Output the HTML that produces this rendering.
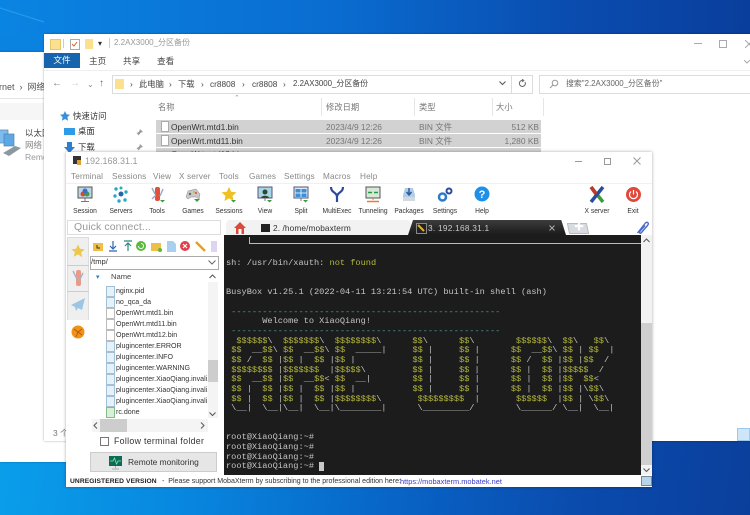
<!DOCTYPE html>
<html><head><meta charset="utf-8"><style>
html,body{margin:0;padding:0}
body{width:750px;height:515px;overflow:hidden;position:relative;background:#0a6fd2;font-family:"Liberation Sans","Noto Sans CJK SC",sans-serif}
#r{position:absolute;left:0;top:0;width:750px;height:515px;overflow:hidden;filter:blur(.35px);background:linear-gradient(98deg,#0aa6ee 0%,#0888e0 30%,#0866c8 55%,#0a4aac 80%,#0b3f9c 100%)}
#r div,#r svg{position:absolute}
.t{white-space:nowrap;line-height:12px}
.m{top:171px;font-size:8.2px;color:#888;letter-spacing:.15px}
.l{width:40px;text-align:center;top:205px;font-size:7.6px;color:#333;transform:scaleX(.88)}
.f{left:116px;font-size:7.7px;color:#333;transform:scaleX(.92);transform-origin:0 0}
.i{left:106px;width:7px;height:9px;background:#e6f2fb;border:.5px solid #a4c0d4}
.w{left:106px;width:7px;height:9px;background:#fff;border:.5px solid #bbb}
pre{position:absolute;margin:0;font-family:"Liberation Mono",monospace;font-size:8.65px;line-height:9.67px;color:#c4c4c4;white-space:pre}
pre b{font-weight:normal;color:#b4b83c}
</style></head><body><div id="r">
<!-- wallpaper -->
<div style="left:0;top:0;width:750px;height:34px;background:linear-gradient(90deg,#0a84e2 0%,#0a6cd0 45%,#0a4db0 75%,#0a3e9c 100%)"></div>
<div style="left:0;top:34px;width:44px;height:18px;background:#0a82e0"></div>
<svg style="left:0;top:0" width="120" height="52"><path d="M0 8L44 22" stroke="#3aa6f0" stroke-width="1.200" opacity=".6"/></svg>

<!-- back window -->
<div style="left:0;top:52px;width:70px;height:410px;background:#fff;box-shadow:0 0 2px rgba(0,0,0,.3)"></div>
<div class="t" style="left:-1px;top:81px;font-size:9px;color:#555">rnet &nbsp;› &nbsp;网络</div>
<div style="left:0;top:98px;width:44px;height:1px;background:#e4e4e4"></div>
<div style="left:0;top:103px;width:44px;height:17px;background:#f6f6f6"></div>
<svg style="left:0;top:128px" width="22" height="30" viewBox="0 0 22 30"><rect x="-4" y="2" width="12" height="13" fill="#7cbcee" stroke="#5a80a8" stroke-width=".7"/><rect x="4" y="6" width="10" height="12" fill="#5aa8e6" stroke="#5a80a8" stroke-width=".7"/><path d="M3 25l12-7 6 2-12 8z" fill="#8a98a2"/></svg>
<div class="t" style="left:25px;top:127px;font-size:8.5px;color:#444">以太网</div>
<div class="t" style="left:25px;top:139px;font-size:8.5px;color:#888">网络</div>
<div class="t" style="left:25px;top:151px;font-size:8.5px;color:#999">Remo</div>

<!-- explorer -->
<div style="left:44px;top:34px;width:706px;height:407px;background:#fff;box-shadow:0 0 2px rgba(0,0,0,.35)"></div>
<div style="left:50px;top:39px;width:9px;height:9px;background:#fbe08f;border:.5px solid #e5c76a"></div>
<div style="left:63px;top:39px;width:1px;height:9px;background:#ccc"></div>
<div style="left:70px;top:39px;width:8px;height:9px;background:#fff;border:1px solid #aaa"></div>
<svg style="left:71px;top:41px" width="7" height="6" viewBox="0 0 7 6"><path d="M1 3l2 2 3-4" fill="none" stroke="#d9602c" stroke-width="1"/></svg>
<div style="left:85px;top:39px;width:8px;height:10px;background:#fbe08f"></div>
<div class="t" style="left:98px;top:38px;font-size:8px;color:#333">▾</div>
<div style="left:109px;top:38px;width:1px;height:10px;background:#ccc"></div>
<div class="t" style="left:114px;top:37px;font-size:8px;color:#999">2.2AX3000_分区备份</div>
<div style="left:694px;top:43px;width:8px;height:1px;background:#aaa"></div>
<div style="left:719px;top:40px;width:6px;height:6px;border:1px solid #aaa"></div>
<svg style="left:745px;top:40px" width="5" height="8"><path d="M0 0l8 8M8 0l-8 8" stroke="#aaa" fill="none"/></svg>
<div class="t" style="left:44px;top:53px;width:36px;height:15px;background:#1663ae;color:#fff;font-size:8.6px;line-height:15px;text-align:center">文件</div>
<div class="t" style="left:89px;top:55px;font-size:8.6px;color:#444">主页</div>
<div class="t" style="left:123px;top:55px;font-size:8.6px;color:#444">共享</div>
<div class="t" style="left:157px;top:55px;font-size:8.6px;color:#444">查看</div>
<svg style="left:744px;top:60px" width="6" height="4"><path d="M0 0l3 3 3-3" fill="none" stroke="#aaa"/></svg>
<div style="left:44px;top:70px;width:706px;height:1px;background:#eee"></div>
<div class="t" style="left:52px;top:78px;font-size:10px;color:#777">←</div>
<div class="t" style="left:70px;top:78px;font-size:10px;color:#ccc">→</div>
<div class="t" style="left:87px;top:79px;font-size:8px;color:#888">⌄</div>
<div class="t" style="left:99px;top:78px;font-size:10px;color:#666">↑</div>
<div style="left:112px;top:75px;width:419px;height:17px;border:1px solid #dcdcdc"></div>
<div style="left:511px;top:75px;width:1px;height:18px;background:#dcdcdc"></div>
<div style="left:115px;top:79px;width:9px;height:10px;background:#fbe08f"></div>
<div class="t" style="left:130px;top:78px;font-size:8.3px;color:#444">›</div>
<div class="t" style="left:139px;top:78px;font-size:8.3px;color:#444">此电脑</div>
<div class="t" style="left:169px;top:78px;font-size:8.3px;color:#444">›</div>
<div class="t" style="left:178px;top:78px;font-size:8.3px;color:#444">下载</div>
<div class="t" style="left:201px;top:78px;font-size:8.3px;color:#444">›</div>
<div class="t" style="left:210px;top:78px;font-size:8.3px;color:#444">cr8808</div>
<div class="t" style="left:242px;top:78px;font-size:8.3px;color:#444">›</div>
<div class="t" style="left:252px;top:78px;font-size:8.3px;color:#444">cr8808</div>
<div class="t" style="left:283px;top:78px;font-size:8.3px;color:#444">›</div>
<div class="t" style="left:293px;top:78px;font-size:7.9px;color:#444">2.2AX3000_分区备份</div>
<svg style="left:499px;top:81px" width="7" height="5"><path d="M.5 .5l3 3 3-3" fill="none" stroke="#555"/></svg>
<svg style="left:518px;top:79px" width="9" height="10" viewBox="0 0 9 10"><path d="M7 3a3 3 0 1 1-2-1.500" fill="none" stroke="#666"/><path d="M4 0l2 1.500-2 1.500" fill="none" stroke="#666" stroke-width=".8"/></svg>
<div style="left:539px;top:75px;width:211px;height:17px;border:1px solid #dcdcdc;border-right:0"></div>
<svg style="left:549px;top:79px" width="10" height="10"><circle cx="6" cy="4" r="2.800" fill="none" stroke="#999"/><path d="M4 6L1 9" stroke="#999"/></svg>
<div class="t" style="left:566px;top:78px;font-size:7.9px;color:#666">搜索"2.2AX3000_分区备份"</div>
<div class="t" style="left:158px;top:101px;font-size:8.3px;color:#777">名称</div>
<div class="t" style="left:326px;top:101px;font-size:8.3px;color:#777">修改日期</div>
<div class="t" style="left:419px;top:101px;font-size:8.3px;color:#777">类型</div>
<div class="t" style="left:496px;top:101px;font-size:8.3px;color:#777">大小</div>
<div style="left:321px;top:98px;width:1px;height:18px;background:#e6e6e6"></div>
<div style="left:414px;top:98px;width:1px;height:18px;background:#e6e6e6"></div>
<div style="left:492px;top:98px;width:1px;height:18px;background:#e6e6e6"></div>
<div style="left:543px;top:98px;width:1px;height:18px;background:#e6e6e6"></div>
<div class="t" style="left:234px;top:93px;font-size:7px;color:#999">⌃</div>
<div style="left:156px;top:120px;width:385px;height:13px;background:#d2d2d2"></div>
<div style="left:156px;top:134px;width:385px;height:13px;background:#d2d2d2"></div>
<div style="left:156px;top:148px;width:385px;height:6px;background:#d2d2d2"></div>
<div style="left:161px;top:121px;width:6px;height:9px;background:#fff;border:.5px solid #aaa"></div>
<div style="left:161px;top:135px;width:6px;height:9px;background:#fff;border:.5px solid #aaa"></div>
<div class="t" style="left:171px;top:121px;font-size:8.4px;color:#333">OpenWrt.mtd1.bin</div>
<div class="t" style="left:171px;top:135px;font-size:8.4px;color:#333">OpenWrt.mtd11.bin</div>
<div class="t" style="left:171px;top:148px;font-size:8.4px;color:#555">OpenWrt.mtd12.bin</div>
<div class="t" style="left:326px;top:121px;font-size:8.4px;color:#777">2023/4/9 12:26</div>
<div class="t" style="left:326px;top:135px;font-size:8.4px;color:#777">2023/4/9 12:26</div>
<div class="t" style="left:419px;top:121px;font-size:8.4px;color:#777">BIN 文件</div>
<div class="t" style="left:419px;top:135px;font-size:8.4px;color:#777">BIN 文件</div>
<div class="t" style="left:490px;width:49px;text-align:right;top:121px;font-size:8.4px;color:#777">512 KB</div>
<div class="t" style="left:490px;width:49px;text-align:right;top:135px;font-size:8.4px;color:#777">1,280 KB</div>
<svg style="left:60px;top:111px" width="10" height="10"><path d="M5 0l1.500 3.300 3.500.4-2.600 2.400.7 3.600L5 8 1.900 9.700l.7-3.600L0 3.700l3.500-.4z" fill="#3a8fdc"/></svg>
<div class="t" style="left:73px;top:110px;font-size:8.4px;color:#333">快速访问</div>
<div style="left:64px;top:128px;width:11px;height:7px;background:#2e9be6"></div>
<div class="t" style="left:78px;top:125px;font-size:8.4px;color:#333">桌面</div>
<svg style="left:64px;top:142px" width="11" height="11"><path d="M3 0h5v5h3L5.500 11 0 5h3z" fill="#2c7fd0"/></svg>
<div class="t" style="left:78px;top:141px;font-size:8.4px;color:#333">下载</div>
<svg style="left:136px;top:129px" width="7" height="7"><path d="M4 0l3 3-2 .5-1.500 1.500L3 6.500 .5 4 2 3.500 3.500 2z" fill="#999"/></svg>
<svg style="left:136px;top:144px" width="7" height="7"><path d="M4 0l3 3-2 .5-1.500 1.500L3 6.500 .5 4 2 3.500 3.500 2z" fill="#999"/></svg>
<div class="t" style="left:53px;top:427px;font-size:8.4px;color:#777">3 个</div>
<div style="left:737px;top:428px;width:13px;height:13px;background:#cfe6f8;border:1px solid #9cc8ec;box-sizing:border-box"></div>

<!-- moba -->
<div style="left:66px;top:152px;width:586px;height:335px;background:#fff;box-shadow:0 0 3px rgba(0,0,0,.35)"></div>
<div style="left:73px;top:156px;width:8px;height:8px;background:#333"></div>
<div style="left:77px;top:160px;width:4px;height:5px;background:#d9a032"></div>
<div class="t" style="left:85px;top:155px;font-size:9px;color:#999">192.168.31.1</div>
<div style="left:575px;top:161px;width:7px;height:1px;background:#999"></div>
<div style="left:604px;top:158px;width:5px;height:5px;border:1px solid #999"></div>
<svg style="left:633px;top:157px" width="8" height="8"><path d="M.5 .5l7 7M7.500 .5l-7 7" stroke="#999" fill="none"/></svg>
<div class="t m" style="left:71px">Terminal</div>
<div class="t m" style="left:112px">Sessions</div>
<div class="t m" style="left:153px">View</div>
<div class="t m" style="left:179px">X server</div>
<div class="t m" style="left:219px">Tools</div>
<div class="t m" style="left:249px">Games</div>
<div class="t m" style="left:284px">Settings</div>
<div class="t m" style="left:323px">Macros</div>
<div class="t m" style="left:360px">Help</div>
<div style="left:66px;top:183px;width:586px;height:1px;background:#f0f0f0"></div>

<!-- toolbar icons -->
<svg style="left:77px;top:186px" width="16" height="17"><rect x="1" y="1" width="14" height="11" fill="#bcd6e6" stroke="#555"/><circle cx="6" cy="8" r="2.500" fill="#d8483c"/><circle cx="10" cy="8" r="2.500" fill="#3c9c4c"/><circle cx="8" cy="5" r="2.500" fill="#3a6fc8"/><path d="M8 12v3M4 15.500h8" stroke="#777"/></svg>
<svg style="left:113px;top:186px" width="16" height="17"><g fill="#2aa8c8"><circle cx="8" cy="8" r="2.500" fill="#2068a8"/><circle cx="3" cy="3" r="1.700"/><circle cx="13" cy="6" r="1.700"/><circle cx="2" cy="10" r="1.700"/><circle cx="6" cy="15" r="1.700"/><circle cx="12" cy="14" r="1.700"/><circle cx="8" cy="2" r="1.500"/></g></svg>
<svg style="left:149px;top:186px" width="16" height="17"><rect x="6" y="1" width="5" height="14" rx="2" fill="#e0503a"/><path d="M3 2l3 6M14 3l-3 7M3 13l4-4" stroke="#a0a8c8" stroke-width="1.500"/><path d="M11 14h5l-2.500 2.500z" fill="#3a9c3a"/></svg>
<svg style="left:185px;top:186px" width="16" height="17"><path d="M1 11l2-6 8-2 4 5-1 5-3-2H6l-3 2z" fill="#c8c8c8" stroke="#888" stroke-width=".5"/><circle cx="11" cy="7" r="1" fill="#e04a3a"/><circle cx="9" cy="6" r="1" fill="#e0b030"/><circle cx="5" cy="8" r="1.200" fill="#666"/><path d="M9 13h6l-3 3z" fill="#3a9c3a"/></svg>
<svg style="left:221px;top:186px" width="16" height="17"><path d="M8 1l2.200 4.800 5.300.6-4 3.500 1.100 5.100L8 12.400 3.400 15l1.100-5.100-4-3.500 5.300-.6z" fill="#f0c020"/><path d="M10 14h5l-2.500 2.500z" fill="#3a9c3a"/></svg>
<svg style="left:257px;top:186px" width="16" height="17"><rect x="1" y="1" width="14" height="11" fill="#a8d4e8" stroke="#557"/><circle cx="8" cy="6" r="2.500" fill="#2a4a2a"/><path d="M4 12c0-3 8-3 8 0z" fill="#2a4a2a"/><path d="M8 12v3" stroke="#777"/><path d="M10 14h5l-2.500 2.500z" fill="#3a9c3a"/></svg>
<svg style="left:293px;top:186px" width="16" height="17"><rect x="1" y="1" width="14" height="11" fill="#dceaf4" stroke="#557"/><rect x="2.500" y="3" width="5" height="3.500" fill="#3a8fd8"/><rect x="8.500" y="3" width="5" height="3.500" fill="#3a8fd8"/><rect x="2.500" y="7.500" width="5" height="3.500" fill="#3a8fd8"/><rect x="8.500" y="7.500" width="5" height="3.500" fill="#3a8fd8"/><path d="M8 12v3" stroke="#777"/><path d="M10 14h5l-2.500 2.500z" fill="#3a9c3a"/></svg>
<svg style="left:329px;top:186px" width="16" height="17"><path d="M2 1c0 6 6 5 6 10v5M14 1c0 6-6 5-6 10" fill="none" stroke="#2e4a9c" stroke-width="2.200"/></svg>
<svg style="left:365px;top:186px" width="16" height="17"><rect x="1" y="1" width="14" height="11" fill="#d8e8d8" stroke="#555"/><path d="M3 6.500h4M9 6.500h4" stroke="#1c9c3c" stroke-width="1.500"/><path d="M8 12v2" stroke="#e08030"/><path d="M2 15.500h12" stroke="#e08030" stroke-width="1.500"/></svg>
<svg style="left:401px;top:186px" width="16" height="17"><path d="M2 9l2-7h8l2 7v6H2z" fill="#b4cce4"/><path d="M8 2v6M5.500 6L8 9l2.500-3" stroke="#2a5ca8" stroke-width="1.500" fill="none"/><rect x="2" y="11" width="12" height="4" fill="#d4d8e0"/></svg>
<svg style="left:437px;top:186px" width="16" height="17"><circle cx="5.500" cy="11" r="3.500" fill="none" stroke="#2a7cc8" stroke-width="2.500"/><circle cx="12" cy="5" r="2.500" fill="none" stroke="#2a4c9c" stroke-width="2"/></svg>
<svg style="left:474px;top:186px" width="16" height="17"><circle cx="8" cy="8" r="7.500" fill="#1e90e8"/><text x="8" y="12" font-size="11" font-weight="bold" fill="#fff" text-anchor="middle" font-family="Liberation Sans">?</text></svg>
<svg style="left:589px;top:186px" width="16" height="17"><path d="M2 1l12 15" stroke="#3a9c3a" stroke-width="3.500"/><path d="M14 1L2 16" stroke="#2a4c9c" stroke-width="3.500"/><path d="M2 1l5 7" stroke="#c0382c" stroke-width="3.500"/></svg>
<svg style="left:626px;top:187px" width="15" height="15"><circle cx="7.500" cy="7.500" r="7.500" fill="#e2483a"/><path d="M5 4.500a4 4 0 1 0 5 0M7.500 3v4.500" fill="none" stroke="#fff" stroke-width="1.200"/></svg>
<div class="t l" style="left:65px">Session</div>
<div class="t l" style="left:101px">Servers</div>
<div class="t l" style="left:137px">Tools</div>
<div class="t l" style="left:173px">Games</div>
<div class="t l" style="left:209px">Sessions</div>
<div class="t l" style="left:245px">View</div>
<div class="t l" style="left:281px">Split</div>
<div class="t l" style="left:317px">MultiExec</div>
<div class="t l" style="left:353px">Tunneling</div>
<div class="t l" style="left:389px">Packages</div>
<div class="t l" style="left:425px">Settings</div>
<div class="t l" style="left:462px">Help</div>
<div class="t l" style="left:577px">X server</div>
<div class="t l" style="left:613px">Exit</div>

<!-- quick connect + tabs -->
<div style="left:67px;top:220px;width:152px;height:13px;border:1px solid #ddd"></div>
<div class="t" style="left:74px;top:221px;font-size:10.5px;color:#999;letter-spacing:.1px">Quick connect...</div>
<div style="left:226px;top:220px;width:185px;height:15px;background:#f2f2f2;border-radius:4px 4px 0 0"></div>
<svg style="left:234px;top:222px" width="12" height="12"><path d="M6 0L0 6h2v6h8V6h2z" fill="#d84a3a"/><rect x="4.500" y="7" width="3" height="5" fill="#fff"/></svg>
<div style="left:261px;top:224px;width:9px;height:8px;background:#222"></div>
<div class="t" style="left:273px;top:222px;font-size:8.3px;color:#333;letter-spacing:.1px">2. /home/mobaxterm</div>
<div style="left:408px;top:220px;width:158px;height:15px;background:linear-gradient(#3c3c3c,#1a1a1a);clip-path:polygon(0 100%,5px 0,97% 0,100% 100%)"></div>
<div style="left:416px;top:223px;width:9px;height:9px;background:#222;border:.5px solid #888"></div>
<svg style="left:417px;top:224px" width="8" height="8"><path d="M1 1l6 6" stroke="#e0b030" stroke-width="2"/></svg>
<div class="t" style="left:428px;top:222px;font-size:8.3px;color:#ccc;letter-spacing:.25px">3. 192.168.31.1</div>
<svg style="left:549px;top:225px" width="6" height="6"><path d="M.5 .5l5 5M5.500 .5l-5 5" stroke="#aaa" fill="none"/></svg>
<div style="left:568px;top:223px;width:18px;height:9px;background:#d8dce0;border:.5px solid #bbb;transform:skewX(12deg)"></div>
<div class="t" style="left:574px;top:222px;font-size:10px;line-height:11px;color:#fff">✚</div>
<svg style="left:636px;top:221px" width="13" height="14"><path d="M1.500 12L9 2.500c2-2.500 4.500-.5 2.500 2L5.500 11.500c-1.300 1.500-2.800.3-1.500-1.300L9 4.500" fill="none" stroke="#4a6cc8" stroke-width="1.400"/></svg>

<!-- terminal -->
<div style="left:224px;top:235px;width:417px;height:240px;background:#1c1c1c"></div>
<div style="left:641px;top:235px;width:11px;height:240px;background:#f2f2f2"></div>
<div style="left:641px;top:323px;width:11px;height:142px;background:#cfcfcf"></div>
<svg style="left:643px;top:468px" width="7" height="5"><path d="M.5 .5l3 3 3-3" fill="none" stroke="#555"/></svg>
<svg style="left:643px;top:238px" width="7" height="5"><path d="M.5 4l3-3 3 3" fill="none" stroke="#555"/></svg>
<div style="left:249px;top:237px;width:1px;height:6px;background:#bbb"></div>
<div style="left:249px;top:243px;width:392px;height:1px;background:#bbb"></div>
<pre style="left:226px;top:240px"> 

sh: /usr/bin/xauth: <b>not found</b>


BusyBox v1.25.1 (2022-04-11 13:21:54 UTC) built-in shell (ash)

<span style="color:#4f9ea0"> ----------------------------------------------------</span>
       Welcome to XiaoQiang!
<span style="color:#4f9ea0"> ----------------------------------------------------</span>
  <b>$$$$$$</b>\  <b>$$$$$$$</b>\  <b>$$$$$$$$</b>\      <b>$$</b>\      <b>$$</b>\        <b>$$$$$$</b>\  <b>$$</b>\   <b>$$</b>\
 <b>$$</b>  __<b>$$</b>\ <b>$$</b>  __<b>$$</b>\ <b>$$</b>  _____|     <b>$$</b> |     <b>$$</b> |      <b>$$</b>  __<b>$$</b>\ <b>$$</b> | <b>$$</b>  |
 <b>$$</b> /  <b>$$</b> |<b>$$</b> |  <b>$$</b> |<b>$$</b> |           <b>$$</b> |     <b>$$</b> |      <b>$$</b> /  <b>$$</b> |<b>$$</b> |<b>$$</b>  /
 <b>$$$$$$$$</b> |<b>$$$$$$$</b>  |<b>$$$$$</b>\         <b>$$</b> |     <b>$$</b> |      <b>$$</b> |  <b>$$</b> |<b>$$$$$</b>  /
 <b>$$</b>  __<b>$$</b> |<b>$$</b>  __<b>$$</b>&lt; <b>$$</b>  __|        <b>$$</b> |     <b>$$</b> |      <b>$$</b> |  <b>$$</b> |<b>$$</b>  <b>$$</b>&lt;
 <b>$$</b> |  <b>$$</b> |<b>$$</b> |  <b>$$</b> |<b>$$</b> |           <b>$$</b> |     <b>$$</b> |      <b>$$</b> |  <b>$$</b> |<b>$$</b> |\<b>$$</b>\
 <b>$$</b> |  <b>$$</b> |<b>$$</b> |  <b>$$</b> |<b>$$$$$$$$</b>\       <b>$$$$$$$$$</b>  |       <b>$$$$$$</b>  |<b>$$</b> | \<b>$$</b>\
 \__|  \__|\__|  \__|\________|      \_________/        \______/ \__|  \__|


root@XiaoQiang:~#
root@XiaoQiang:~#
root@XiaoQiang:~#
root@XiaoQiang:~# </pre>
<div style="left:319px;top:462px;width:5px;height:9px;background:#c8c8c8"></div>

<!-- side tabs -->
<div style="left:67px;top:237px;width:22px;height:110px;background:#efefef;border:1px solid #dcdcdc;box-sizing:border-box"></div>
<div style="left:67px;top:265px;width:22px;height:1px;background:#ccc"></div>
<div style="left:67px;top:291px;width:22px;height:1px;background:#ccc"></div>
<div style="left:67px;top:320px;width:23px;height:27px;background:#fff"></div>
<svg style="left:71px;top:244px" width="14" height="14"><path d="M7 .5l2 4.300 4.700.5-3.500 3.200 1 4.700L7 10.400 2.800 12.700l1-4.700L.3 5.300 5 4.800z" fill="#eec84a"/></svg>
<svg style="left:72px;top:269px" width="12" height="18"><rect x="4" y="1" width="5" height="16" rx="2" fill="#ec9a86"/><path d="M1 2l4 8M11 4L7 12" stroke="#a8b0d0" stroke-width="1.400"/></svg>
<svg style="left:71px;top:298px" width="14" height="14"><path d="M14 0L0 7l4 2 1 4 2-3 4 2z" fill="#9cc6e4"/></svg>
<svg style="left:71px;top:325px" width="14" height="14"><circle cx="7" cy="7" r="6.500" fill="#f0921a"/><path d="M3 4l4 3 4-3M7 7l-2 5M7 7l4 3" stroke="#b45a08" stroke-width=".9" fill="none"/></svg>

<!-- sftp toolbar -->
<svg style="left:92px;top:240px" width="130" height="13">
<rect x="1" y="3" width="10" height="8" fill="#eec04a"/><path d="M5 5v3h3" stroke="#333" fill="none"/>
<path d="M21 1v7M18 6l3 3 3-3M17 11h8" stroke="#2a64b8" stroke-width="1.200" fill="none"/>
<path d="M36 11V4M33 6l3-3 3 3M32 1h8" stroke="#2a8878" stroke-width="1.200" fill="none"/>
<circle cx="49" cy="6" r="5" fill="#5cb83a"/><path d="M46.500 6a2.500 2.500 0 1 0 2.500-2.500" stroke="#fff" fill="none"/>
<rect x="59" y="3" width="10" height="8" fill="#eec04a"/><circle cx="68" cy="10" r="2" fill="#5cb83a"/>
<path d="M75 1h6l3 3v8h-9z" fill="#a8d0f0"/>
<circle cx="93" cy="6" r="5" fill="#e0404a"/><path d="M91 4l4 4M95 4l-4 4" stroke="#fff" stroke-width="1.200"/>
<path d="M104 2l3 3 6 6" stroke="#e8a020" stroke-width="2.500" fill="none"/>
<rect x="119" y="1" width="6" height="11" fill="#dcd4f0"/>
</svg>
<div style="left:90px;top:256px;width:127px;height:12px;border:1px solid #aaa;background:#fff"></div>
<div class="t" style="left:91px;top:256px;font-size:7.6px;color:#333">/tmp/</div>
<svg style="left:208px;top:260px" width="8" height="5"><path d="M.5 .5l3.500 3.500 3.500-3.500" fill="none" stroke="#666"/></svg>
<div class="t" style="left:96px;top:272px;font-size:7px;color:#2a7cc8">▾</div>
<div class="t" style="left:111px;top:271px;font-size:7.6px;color:#444">Name</div>
<svg style="left:209px;top:274px" width="7" height="5"><path d="M.5 4l3-3 3 3" fill="none" stroke="#555"/></svg>

<!-- file list -->
<div class="i" style="top:286px"></div>
<div class="i" style="top:297px"></div>
<div class="w" style="top:308px"></div>
<div class="w" style="top:319px"></div>
<div class="w" style="top:330px"></div>
<div class="i" style="top:341px"></div>
<div class="i" style="top:352px"></div>
<div class="i" style="top:363px"></div>
<div class="i" style="top:374px"></div>
<div class="i" style="top:385px"></div>
<div class="i" style="top:396px"></div>
<div class="i" style="top:407px;background:#d8f0d8;border-color:#8b8"></div>
<div class="t f" style="top:285px">nginx.pid</div>
<div class="t f" style="top:296px">no_qca_da</div>
<div class="t f" style="top:307px">OpenWrt.mtd1.bin</div>
<div class="t f" style="top:318px">OpenWrt.mtd11.bin</div>
<div class="t f" style="top:329px">OpenWrt.mtd12.bin</div>
<div class="t f" style="top:340px">plugincenter.ERROR</div>
<div class="t f" style="top:351px">plugincenter.INFO</div>
<div class="t f" style="top:362px">plugincenter.WARNING</div>
<div class="t f" style="top:373px;width:100px;overflow:hidden">plugincenter.XiaoQiang.invali.</div>
<div class="t f" style="top:384px;width:100px;overflow:hidden">plugincenter.XiaoQiang.invali.</div>
<div class="t f" style="top:395px;width:100px;overflow:hidden">plugincenter.XiaoQiang.invali.</div>
<div class="t f" style="top:406px">rc.done</div>
<div style="left:208px;top:282px;width:10px;height:136px;background:#f4f4f4"></div>
<div style="left:208px;top:360px;width:10px;height:22px;background:#cdcdcd"></div>
<svg style="left:209px;top:412px" width="7" height="5"><path d="M.5 .5l3 3 3-3" fill="none" stroke="#555"/></svg>
<div style="left:92px;top:419px;width:116px;height:13px;background:#f4f4f4"></div>
<div style="left:100px;top:419px;width:27px;height:13px;background:#cdcdcd"></div>
<svg style="left:93px;top:422px" width="5" height="7"><path d="M4 .5L1 3.500 4 6.500" fill="none" stroke="#555"/></svg>
<svg style="left:200px;top:422px" width="5" height="7"><path d="M1 .5L4 3.500 1 6.500" fill="none" stroke="#555"/></svg>
<div style="left:100px;top:437px;width:7px;height:7px;border:1px solid #777;background:#fff"></div>
<div class="t" style="left:114px;top:435px;font-size:8.8px;color:#333;letter-spacing:.3px">Follow terminal folder</div>
<div style="left:90px;top:452px;width:127px;height:20px;background:#e6e6e6;border:1px solid #ccc;box-sizing:border-box"></div>
<svg style="left:109px;top:456px" width="14" height="14"><rect x="0" y="0" width="13" height="10" fill="#0e6a58"/><path d="M1 5h3l1.500-3 2 6 1.500-3h3" fill="none" stroke="#7ef0a0" stroke-width=".8"/><path d="M6.500 10v2M3 13h7" stroke="#aaa"/></svg>
<div class="t" style="left:128px;top:456px;font-size:8.4px;color:#333">Remote monitoring</div>

<!-- status -->
<div class="t" style="left:70px;top:476px;font-size:6.7px;font-weight:bold;color:#222;letter-spacing:.08px">UNREGISTERED VERSION</div>
<div class="t" style="left:162px;top:476px;font-size:7.05px;color:#333">- &nbsp;Please support MobaXterm by subscribing to the professional edition here:</div>
<div class="t" style="left:400px;top:476px;font-size:7.4px;color:#3a3ac8">https://mobaxterm.mobatek.net</div>
<div style="left:641px;top:476px;width:9px;height:8px;background:#b8d4e8;border:.5px solid #789"></div>
</div></body></html>
